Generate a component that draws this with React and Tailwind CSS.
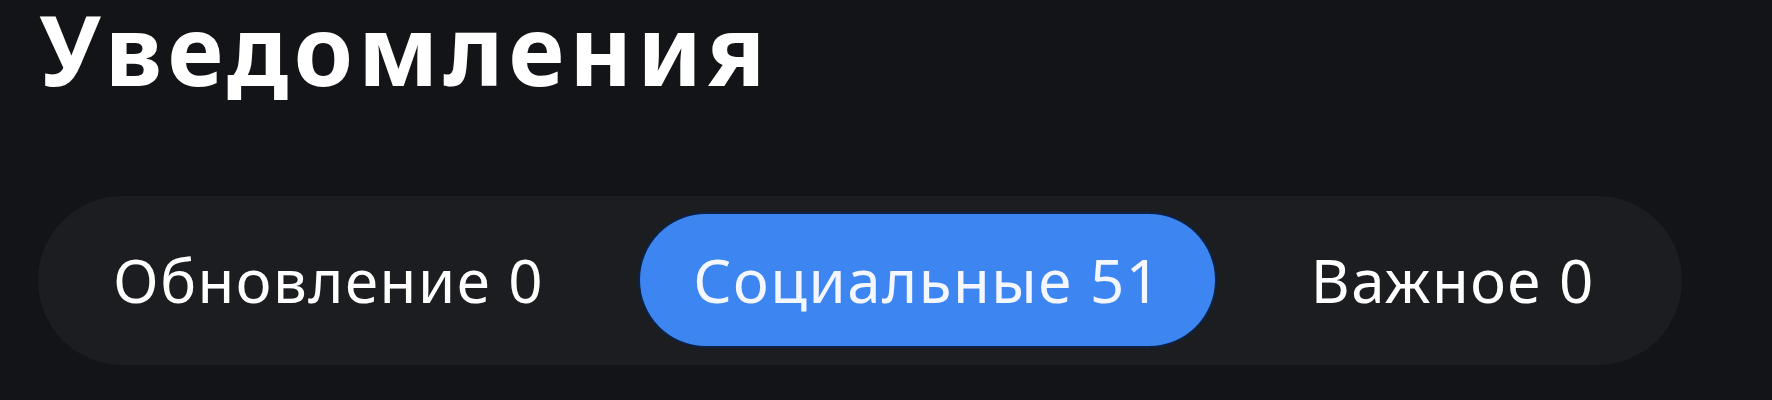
import React from 'react';

const tabs = [
  { label: 'Обновление', count: 0 },
  { label: 'Социальные', count: 51, active: true },
  { label: 'Важное', count: 0 },
];

export default function App() {
  return (
    <div className="w-full h-[400px] bg-[#131417] overflow-hidden font-['Noto_Sans',sans-serif]">
      <h1 className="pl-[39px] text-[96px] font-bold leading-[1.02] text-white tracking-[5px]">
        Уведомления
      </h1>

      {/* Tabs */}
      <div className="mt-[98px] ml-[38px] w-[1644px] h-[169px] rounded-full bg-[#1c1d21] px-[19px] flex items-center gap-[40px]">
        {tabs.map((t) => (
          <div
            key={t.label}
            className={`h-[132px] rounded-full flex items-center text-[60px] leading-none tracking-[1.5px] whitespace-nowrap ${
              t.active ? 'px-[53px] bg-[#3d85f0] text-[#f4f7ff] shadow-[0_0_0_2px_#0d2244]' : 'px-[56px] text-white'
            }`}
          >
            {t.label} {t.count}
          </div>
        ))}
      </div>
    </div>
  );
}
